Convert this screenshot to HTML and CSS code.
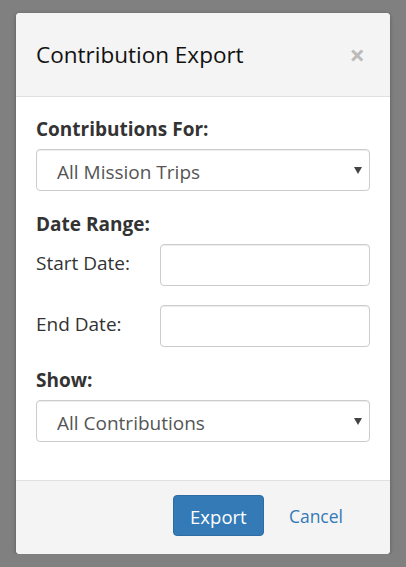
FILE: index.html
```html
<!DOCTYPE html>
<html lang="en">
<head>
    <meta charset="UTF-8">
    <meta name="viewport" content="width=device-width, initial-scale=1.0">
    <title>Contribution Export</title>
    <link rel="stylesheet" href="styles.css">
</head>
<body>
    <div class="modal">
        <div class="modal-header">
            <h4 class="modal-title">Contribution Export</h4>
            <span class="close">&times;</span>
        </div>

        <div class="modal-body">
            <div class="field">
                <label class="field-label">Contributions For:</label>
                <div class="select-wrap">
                    <select class="form-control">
                        <option>All Mission Trips</option>
                    </select>
                    <svg class="select-arrow" width="8" height="7" viewBox="0 0 8 7"><path d="M0 0h8L4 7z" fill="#444"/></svg>
                </div>
            </div>

            <div class="field">
                <label class="field-label">Date Range:</label>
                <div class="date-row">
                    <span class="date-label">Start Date:</span>
                    <input type="text" class="form-control date-input">
                </div>
                <div class="date-row">
                    <span class="date-label">End Date:</span>
                    <input type="text" class="form-control date-input">
                </div>
            </div>

            <div class="field">
                <label class="field-label">Show:</label>
                <div class="select-wrap">
                    <select class="form-control">
                        <option>All Contributions</option>
                    </select>
                    <svg class="select-arrow" width="8" height="7" viewBox="0 0 8 7"><path d="M0 0h8L4 7z" fill="#444"/></svg>
                </div>
            </div>
        </div>

        <div class="modal-footer">
            <button class="btn btn-primary">Export</button>
            <button class="btn btn-link">Cancel</button>
        </div>
    </div>
</body>
</html>
```

FILE: styles.css
```css
:root {
    --primary: #337ab7;
    --gray-bg: #f4f4f4;
    --border: #ccc;
    --divider: #e0e0e0;
    --text: #333;
    --muted: #555;
}

* {
    margin: 0;
    padding: 0;
    box-sizing: border-box;
    font-family: 'Open Sans', sans-serif;
}

body {
    background-color: #808080;
    color: var(--text);
    padding-top: 13px;
}

.modal {
    width: 374px;
    margin: 0 auto;
    background: white;
    border-radius: 4px;
    overflow: hidden;
    box-shadow: 0 1px 4px rgba(0, 0, 0, 0.3);
}

.modal-header {
    background: var(--gray-bg);
    border-bottom: 1px solid var(--divider);
    padding: 0 25px 0 20px;
    height: 84px;
    display: flex;
    justify-content: space-between;
    align-items: center;
}

.modal-title {
    font-size: 22.5px;
    font-weight: 400;
    color: #111;
}

.close {
    font-size: 27px;
    font-weight: bold;
    color: #bbb;
    line-height: 1;
    margin-top: -1px;
}

.modal-body {
    padding: 20px 20px 38px;
}

.field {
    margin-bottom: 21px;
}

.field:last-child {
    margin-bottom: 0;
}

.field-label {
    display: block;
    font-size: 19px;
    line-height: 24px;
    font-weight: 700;
    margin-bottom: 8px;
}

.form-control {
    width: 100%;
    height: 42px;
    border: 1px solid var(--border);
    border-radius: 4px;
    background: white;
    font-size: 19px;
    color: var(--muted);
    padding: 3px 20px 0;
    appearance: none;
    -webkit-appearance: none;
    box-shadow: inset 0 1px 1px rgba(0, 0, 0, 0.075);
}

.select-wrap {
    position: relative;
}

.select-arrow {
    position: absolute;
    right: 8px;
    top: 18px;
}

.date-row {
    display: flex;
    align-items: flex-start;
    margin-bottom: 19px;
}

.date-row:last-child {
    margin-bottom: 0;
}

.date-label {
    width: 124px;
    font-size: 19px;
    line-height: 26px;
    margin-top: 6px;
}

.date-input {
    width: 210px;
}

.modal-footer {
    background: var(--gray-bg);
    border-top: 1px solid var(--divider);
    padding: 14px 47px 18px 0;
    display: flex;
    justify-content: flex-end;
    align-items: center;
    gap: 25px;
}

.btn {
    font-size: 18.5px;
    border-radius: 4px;
    cursor: pointer;
}

.btn-primary {
    background: var(--primary);
    color: white;
    border: 1px solid #2e6da4;
    height: 41px;
    width: 91px;
    padding-top: 1px;
}

.btn-link {
    background: none;
    border: none;
    color: var(--primary);
    font-size: 17.5px;
}
```
